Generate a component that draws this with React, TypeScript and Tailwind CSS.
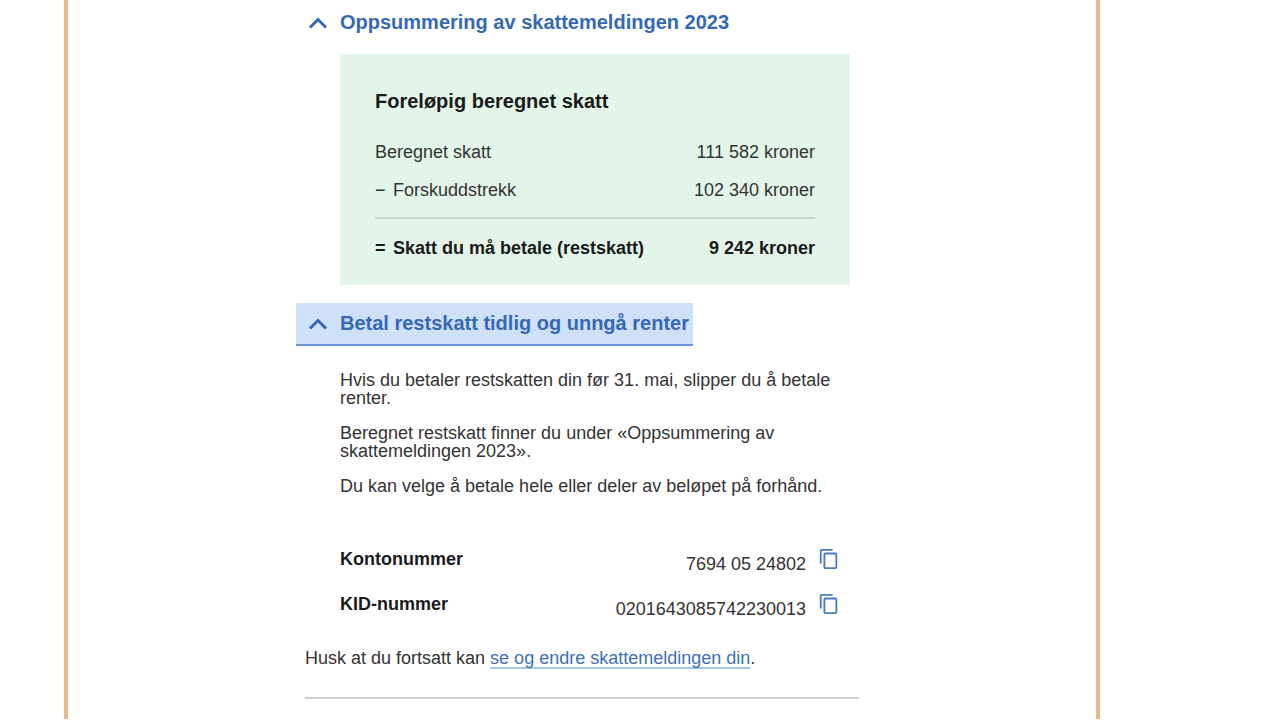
import React, { useState } from 'react';
import { MdContentCopy } from 'react-icons/md';

interface SectionProps {
  id: string;
  title: string;
  highlighted?: boolean;
  children: React.ReactNode;
}

interface PaymentField {
  id: string;
  label: string;
  value: string;
}

const paymentFields: PaymentField[] = [
  { id: 'konto', label: 'Kontonummer', value: '7694 05 24802' },
  { id: 'kid', label: 'KID-nummer', value: '0201643085742230013' },
];

function Section({ id, title, highlighted, children }: SectionProps) {
  const [open, setOpen] = useState(true);

  return (
    <section>
      <h2>
        <button
          type="button"
          aria-expanded={open}
          aria-controls={id}
          onClick={() => setOpen(!open)}
          className={`flex items-center gap-3 border-b-2 py-2 pr-1 pl-3 text-left text-[20px] leading-[25px] font-bold text-[#3668b4] ${
            highlighted ? 'border-[#6795d3] bg-[#cfe0f9]' : 'border-transparent'
          }`}
        >
          <svg className="w-5 h-4 shrink-0" viewBox="0 0 20 16" fill="none" stroke="currentColor" strokeWidth="3" aria-hidden="true">
            <path d="M2 12.5 L10 4.5 L18 12.5" />
          </svg>
          {title}
        </button>
      </h2>
      {open && <div id={id} className="ml-11 mr-[18px]">{children}</div>}
    </section>
  );
}

export default function App() {
  return (
    <div className="bg-white pb-px text-lg leading-[18px] text-[#333333] font-['Liberation_Sans',Arial,sans-serif]">
      <div className="ml-16 mr-45 border-x-4 border-[#e5b98a] pt-0.5">
        <main className="mx-auto max-w-[572px] pb-5">
          <Section id="oppsummering" title="Oppsummering av skattemeldingen 2023">
            <div className="mt-[9px] mb-[18px] bg-[#e3f5e8] px-[35px] pt-[35px] pb-7">
              <h3 className="text-[20px] leading-6 font-bold text-[#1a1a1a]">Foreløpig beregnet skatt</h3>
              <table className="mt-5 w-full">
                <tbody>
                  <tr>
                    <th scope="row" className="pt-2.5 pb-2.5 text-left font-normal">Beregnet skatt</th>
                    <td className="text-right">111 582 kroner</td>
                  </tr>
                  <tr className="border-b-2 border-[#cad0cc]">
                    <th scope="row" className="pt-2.5 pb-[18px] text-left font-normal">
                      <span className="inline-block w-[18px]">−</span>Forskuddstrekk
                    </th>
                    <td className="pt-2.5 pb-[18px] text-right">102 340 kroner</td>
                  </tr>
                  <tr className="font-bold text-[#1a1a1a]">
                    <th scope="row" className="pt-5 text-left">
                      <span className="inline-block w-[18px]">=</span>Skatt du må betale (restskatt)
                    </th>
                    <td className="pt-5 text-right">9 242 kroner</td>
                  </tr>
                </tbody>
              </table>
            </div>
          </Section>

          <Section id="betaling" title="Betal restskatt tidlig og unngå renter" highlighted>
            <div className="mt-[25px] space-y-[17px]">
              <p>Hvis du betaler restskatten din før 31. mai, slipper du å betale renter.</p>
              <p>Beregnet restskatt finner du under «Oppsummering av skattemeldingen 2023».</p>
              <p>Du kan velge å betale hele eller deler av beløpet på forhånd.</p>
            </div>
            <dl className="mt-[53px] mr-2.5 space-y-5">
              {paymentFields.map((field) => (
                <div key={field.id} className="flex items-start justify-between">
                  <dt className="pt-0.5 font-bold text-[#1a1a1a]">{field.label}</dt>
                  <dd className="flex items-start gap-3">
                    <span className="pt-[7px]">{field.value}</span>
                    <button
                      type="button"
                      aria-label={`Kopier ${field.label}`}
                      onClick={() => navigator.clipboard.writeText(field.value)}
                      className="text-[#4a7ac2]"
                    >
                      <MdContentCopy className="size-[22px]" />
                    </button>
                  </dd>
                </div>
              ))}
            </dl>
          </Section>

          <p className="mx-[9px] mt-[31px] border-b-2 border-[#d0d0d0] pb-[30px]">
            Husk at du fortsatt kan{' '}
            <a href="#skattemelding" className="text-[#3d70bd] underline decoration-[#a9c5ea] decoration-2 underline-offset-[3px] [text-decoration-skip-ink:none]">se og endre skattemeldingen din</a>.
          </p>
        </main>
      </div>
    </div>
  );
}
